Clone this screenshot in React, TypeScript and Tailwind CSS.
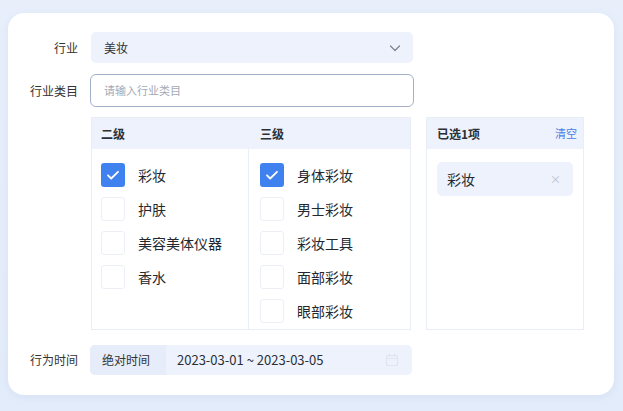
import React from "react";

const col2 = [
  { label: "彩妆", checked: true },
  { label: "护肤", checked: false },
  { label: "美容美体仪器", checked: false },
  { label: "香水", checked: false },
];

const col3 = [
  { label: "身体彩妆", checked: true },
  { label: "男士彩妆", checked: false },
  { label: "彩妆工具", checked: false },
  { label: "面部彩妆", checked: false },
  { label: "眼部彩妆", checked: false },
];

function Check({ checked }: { checked: boolean }) {
  return checked ? (
    <span className="flex h-6 w-6 shrink-0 items-center justify-center rounded-[3px] bg-[#3f82ef]">
      <svg viewBox="0 0 16 16" className="h-4 w-4" fill="none" stroke="white" strokeWidth="1.8" strokeLinecap="round" strokeLinejoin="round">
        <path d="M3 8.3l3.2 3.2L13 4.8" />
      </svg>
    </span>
  ) : (
    <span className="h-6 w-6 shrink-0 rounded-[3px] border border-[#eceff5] bg-white" />
  );
}

function Column({ items, className }: { items: { label: string; checked: boolean }[]; className?: string }) {
  return (
    <div className={"flex flex-col gap-[10px] pl-[9px] pt-[14px] " + (className ?? "")}>
      {items.map((it) => (
        <div key={it.label} className="flex items-center gap-[13px]">
          <Check checked={it.checked} />
          <span className="text-[14px] text-[#23272e]">{it.label}</span>
        </div>
      ))}
    </div>
  );
}

export default function App() {
  return (
    <div
      className="h-[411px] w-[623px] bg-gradient-to-b from-[#e8effb] to-[#e3ecfa] pl-2 pt-[13px]"
      style={{ fontFamily: '"Noto Sans CJK SC", "Noto Sans", sans-serif' }}
    >
      <div className="flex h-[382px] w-[606px] flex-col rounded-2xl bg-white pt-[19px] shadow-[0_2px_8px_rgba(120,150,200,0.12)]">
        {/* 行业 */}
        <div className="flex items-center">
          <span className="w-[70px] text-right text-[12px] text-[#333]">行业</span>
          <div className="ml-[13px] flex h-[31px] w-[322px] items-center justify-between rounded-[5px] bg-[#eef2fc] pl-[13px] pr-[10px]">
            <span className="text-[12px] text-[#333]">美妆</span>
            <svg viewBox="0 0 16 16" className="h-4 w-4" fill="none" stroke="#7a8292" strokeWidth="1.2" strokeLinecap="round" strokeLinejoin="round">
              <path d="M3.5 6l4.5 4.5L12.5 6" />
            </svg>
          </div>
        </div>

        {/* 行业类目 */}
        <div className="mt-[11px] flex items-center">
          <span className="w-[70px] text-right text-[12px] text-[#333]">行业类目</span>
          <div className="ml-3 flex h-[33px] w-[324px] items-center rounded-[6px] border border-[#a3b0c8] bg-white pl-[13px]">
            <span className="text-[11px] text-[#a4aab5]">请输入行业类目</span>
          </div>
        </div>

        {/* 选择面板 */}
        <div className="ml-[83px] mt-[10px] flex gap-[15px]">
          <div className="flex h-[213px] w-[320px] flex-col border border-[#e9eef6]">
            <div className="flex h-[31px] shrink-0 items-center bg-[#edf2fc] text-[12px] font-bold text-[#2b2f36]">
              <span className="w-[157px] pl-[9px]">二级</span>
              <span className="pl-[11px]">三级</span>
            </div>
            <div className="flex flex-1">
              <Column items={col2} className="w-[157px] border-r border-[#e9eef6]" />
              <Column items={col3} className="pl-[11px]" />
            </div>
          </div>

          <div className="flex h-[213px] w-[158px] flex-col border border-[#e9eef6]">
            <div className="flex h-[31px] shrink-0 items-center justify-between bg-[#edf2fc] pl-[10px] pr-[6px]">
              <span className="text-[12px] font-bold text-[#2b2f36]">已选1项</span>
              <span className="text-[11px] text-[#4a7ee6]">清空</span>
            </div>
            <div className="ml-[10px] mt-[13px] flex h-[34px] w-[136px] items-center justify-between rounded-[5px] bg-[#edf2fc] pl-[10px] pr-[12px]">
              <span className="text-[14px] text-[#23272e]">彩妆</span>
              <span className="text-[11px] text-[#b8bec9]">×</span>
            </div>
          </div>
        </div>

        {/* 行为时间 */}
        <div className="mt-[15px] flex items-center">
          <span className="w-[70px] text-right text-[12px] text-[#333]">行为时间</span>
          <div className="ml-[12px] flex h-[30px] w-[322px] items-center overflow-hidden rounded-[5px] bg-[#eef2fc]">
            <span className="flex h-full w-[76px] items-center bg-[#e6ecf9] pl-[12px] text-[12px] text-[#333]">绝对时间</span>
            <span className="ml-[11px] flex-1 text-[13px] text-[#2b2f36]">2023-03-01 ~ 2023-03-05</span>
            <svg viewBox="0 0 16 16" className="mr-[12px] h-4 w-4" fill="none" stroke="#dfe4ee" strokeWidth="1.2">
              <rect x="2.5" y="3.5" width="11" height="10" rx="1" />
              <path d="M2.5 6.5h11M5.5 2v3M10.5 2v3" />
            </svg>
          </div>
        </div>
      </div>
    </div>
  );
}
